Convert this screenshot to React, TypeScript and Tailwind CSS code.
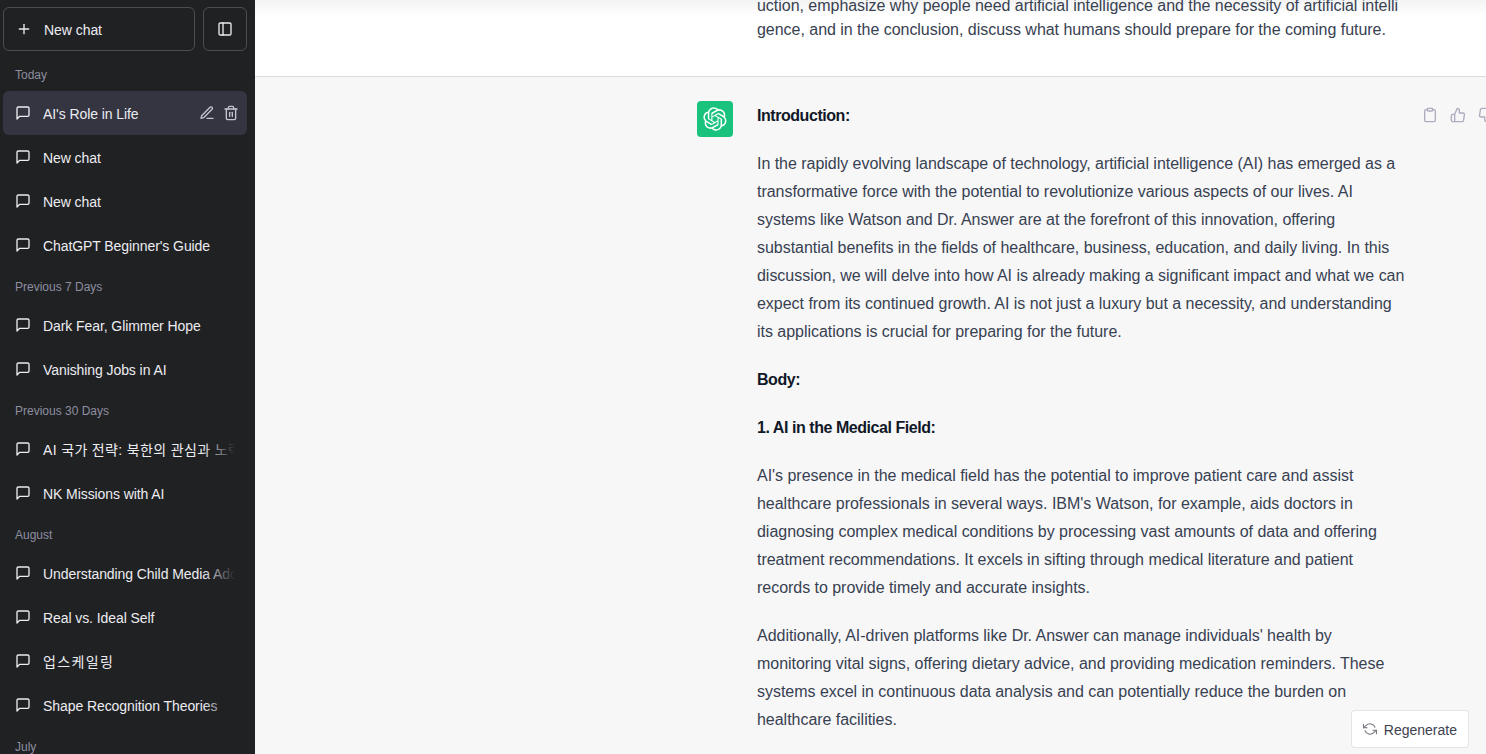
import React from "react";

const Ic = ({ className = "", children, w = 2 }: { className?: string; children: React.ReactNode; w?: number }) => (
  <svg viewBox="0 0 24 24" fill="none" stroke="currentColor" strokeWidth={w} strokeLinecap="round" strokeLinejoin="round" className={className}>
    {children}
  </svg>
);

const Chat = () => (
  <Ic className="h-4 w-4 shrink-0">
    <path d="M21 15a2 2 0 0 1-2 2H7l-4 4V5a2 2 0 0 1 2-2h14a2 2 0 0 1 2 2z" />
  </Ic>
);

const Row = ({ title, active, fade, spacing = "tracking-[-0.08px]" }: { title: string; active?: boolean; fade?: boolean; spacing?: string }) => (
  <div className={`relative flex h-11 items-center gap-3 rounded-md px-3 ${active ? "bg-[#343541]" : ""}`}>
    <Chat />
    <div className={`relative flex-1 overflow-hidden whitespace-nowrap pt-0.5 text-sm leading-5 ${spacing}`}>
      {title}
      {fade && <div className="absolute inset-y-0 right-0 w-8 bg-gradient-to-l from-[#202123] to-transparent" />}
    </div>
    {active && (
      <div className="absolute right-2 top-0 flex h-full items-center gap-2 text-[#c5c5d2]">
        <Ic className="h-4 w-4">
          <path d="M12 20h9" />
          <path d="M16.5 3.5a2.121 2.121 0 0 1 3 3L7 19l-4 1 1-4L16.5 3.5z" />
        </Ic>
        <Ic className="h-4 w-4">
          <polyline points="3 6 5 6 21 6" />
          <path d="M19 6v14a2 2 0 0 1-2 2H7a2 2 0 0 1-2-2V6m3 0V4a2 2 0 0 1 2-2h4a2 2 0 0 1 2 2v2" />
          <line x1="10" y1="11" x2="10" y2="17" />
          <line x1="14" y1="11" x2="14" y2="17" />
        </Ic>
      </div>
    )}
  </div>
);

const Label = ({ text }: { text: string }) => (
  <div className="h-9 px-3 pb-2 pt-3 text-xs font-medium leading-4 text-[#8e8ea0]">{text}</div>
);

const paragraphs: { bold?: boolean; lines: string[] }[] = [
  { bold: true, lines: ["Introduction:"] },
  {
    lines: [
      "In the rapidly evolving landscape of technology, artificial intelligence (AI) has emerged as a",
      "transformative force with the potential to revolutionize various aspects of our lives. AI",
      "systems like Watson and Dr. Answer are at the forefront of this innovation, offering",
      "substantial benefits in the fields of healthcare, business, education, and daily living. In this",
      "discussion, we will delve into how AI is already making a significant impact and what we can",
      "expect from its continued growth. AI is not just a luxury but a necessity, and understanding",
      "its applications is crucial for preparing for the future.",
    ],
  },
  { bold: true, lines: ["Body:"] },
  { bold: true, lines: ["1. AI in the Medical Field:"] },
  {
    lines: [
      "AI's presence in the medical field has the potential to improve patient care and assist",
      "healthcare professionals in several ways. IBM's Watson, for example, aids doctors in",
      "diagnosing complex medical conditions by processing vast amounts of data and offering",
      "treatment recommendations. It excels in sifting through medical literature and patient",
      "records to provide timely and accurate insights.",
    ],
  },
  {
    lines: [
      "Additionally, AI-driven platforms like Dr. Answer can manage individuals' health by",
      "monitoring vital signs, offering dietary advice, and providing medication reminders. These",
      "systems excel in continuous data analysis and can potentially reduce the burden on",
      "healthcare facilities.",
    ],
  },
];

export default function App() {
  return (
    <div className="flex h-[754px] w-[1486px] overflow-hidden bg-white font-['Liberation_Sans','Noto_Sans_CJK_KR',sans-serif] text-[#374151]">
      <aside className="flex w-[255px] shrink-0 flex-col overflow-hidden bg-[#202123] pl-[3px] pr-2 pt-[7px] text-[#ececf1]">
        <div className="flex gap-2">
          <div className="flex h-11 flex-1 items-center gap-3 rounded-md border border-white/20 px-3 text-sm">
            <Ic className="h-4 w-4">
              <line x1="12" y1="5" x2="12" y2="19" />
              <line x1="5" y1="12" x2="19" y2="12" />
            </Ic>
            <span className="pt-0.5 tracking-[-0.05px]">New chat</span>
          </div>
          <div className="flex h-11 w-11 items-center justify-center rounded-md border border-white/20">
            <Ic className="h-4 w-4">
              <rect x="3" y="3" width="18" height="18" rx="2" ry="2" />
              <line x1="9" y1="3" x2="9" y2="21" />
            </Ic>
          </div>
        </div>
        <div className="mt-1 shrink-0">
          <Label text="Today" />
          <Row title="AI's Role in Life" active />
          <Row title="New chat" />
          <Row title="New chat" />
          <Row title="ChatGPT Beginner's Guide" />
          <Label text="Previous 7 Days" />
          <Row title="Dark Fear, Glimmer Hope" />
          <Row title="Vanishing Jobs in AI" />
          <Label text="Previous 30 Days" />
          <Row title="AI 국가 전략: 북한의 관심과 노력에 대한 분석" fade spacing="tracking-[0.35px]" />
          <Row title="NK Missions with AI" />
          <Label text="August" />
          <Row title="Understanding Child Media Addiction" fade />
          <Row title="Real vs. Ideal Self" />
          <Row title="업스케일링" spacing="tracking-[1.4px]" />
          <Row title="Shape Recognition Theories" fade />
          <Label text="July" />
        </div>
      </aside>

      <main className="relative flex min-w-0 flex-1 flex-col overflow-hidden">
        <div className="relative flex h-[77px] shrink-0 flex-col justify-end overflow-hidden border-b border-black/10 bg-gradient-to-b from-[#f3f3f3] via-white via-20% to-white pb-[34px] pl-[502px] leading-6 tracking-[-0.03px]">
          <div className="whitespace-nowrap">uction, emphasize why people need artificial intelligence and the necessity of artificial intelli</div>
          <div className="whitespace-nowrap">gence, and in the conclusion, discuss what humans should prepare for the coming future.</div>
        </div>
        <div className="flex flex-1 bg-[#f7f7f8] pl-[442px] pt-6">
          <div className="mr-6 flex h-9 w-9 shrink-0 items-center justify-center rounded-sm bg-[#19c37d] text-white">
            <svg viewBox="0 0 41 41" fill="currentColor" className="h-6 w-6">
              <path d="M37.5324 16.8707C37.9808 15.5241 38.1363 14.0974 37.9886 12.6859C37.8409 11.2744 37.3934 9.91076 36.676 8.68622C35.6126 6.83404 33.9882 5.3676 32.0373 4.4985C30.0864 3.62941 27.9098 3.40259 25.8215 3.85078C24.8796 2.7893 23.7219 1.94125 22.4257 1.36341C21.1295 0.785575 19.7249 0.491269 18.3058 0.500197C16.1708 0.495044 14.0893 1.16803 12.3614 2.42214C10.6335 3.67624 9.34853 5.44666 8.6917 7.47815C7.30085 7.76286 5.98686 8.3414 4.8377 9.17505C3.68854 10.0087 2.73073 11.0782 2.02839 12.312C0.956464 14.1591 0.498905 16.2988 0.721698 18.4228C0.944492 20.5467 1.83612 22.5449 3.268 24.1293C2.81966 25.4759 2.66413 26.9026 2.81182 28.3141C2.95951 29.7256 3.40701 31.0892 4.12437 32.3138C5.18791 34.1659 6.8123 35.6322 8.76321 36.5013C10.7141 37.3704 12.8907 37.5973 14.9789 37.1492C15.9208 38.2107 17.0786 39.0587 18.3747 39.6366C19.6709 40.2144 21.0755 40.5087 22.4946 40.4998C24.6307 40.5054 26.7133 39.8321 28.4418 38.5772C30.1704 37.3223 31.4556 35.5506 32.1119 33.5179C33.5027 33.2332 34.8167 32.6547 35.9659 31.821C37.115 30.9874 38.0728 29.9178 38.7752 28.684C39.8458 26.8371 40.3023 24.6979 40.0789 22.5748C39.8556 20.4517 38.9639 18.4544 37.5324 16.8707ZM22.4978 37.8849C20.7443 37.8874 19.0459 37.2733 17.6994 36.1501C17.7601 36.117 17.8666 36.0586 17.936 36.0161L25.9004 31.4156C26.1003 31.3019 26.2663 31.137 26.3813 30.9378C26.4964 30.7386 26.5563 30.5124 26.5549 30.2825V19.0542L29.9213 20.998C29.9389 21.0068 29.9541 21.0198 29.9656 21.0359C29.977 21.052 29.9842 21.0707 29.9867 21.0902V30.3889C29.9842 32.375 29.1946 34.2791 27.7909 35.6841C26.3872 37.0892 24.4838 37.8806 22.4978 37.8849ZM6.39227 31.0064C5.51397 29.4888 5.19742 27.7107 5.49804 25.9832C5.55718 26.0187 5.66048 26.0818 5.73461 26.1244L13.699 30.7248C13.8975 30.8408 14.1233 30.902 14.3532 30.902C14.583 30.902 14.8088 30.8408 15.0073 30.7248L24.731 25.1103V28.9979C24.7321 29.0177 24.7283 29.0376 24.7199 29.0556C24.7115 29.0736 24.6988 29.0893 24.6829 29.1012L16.6317 33.7497C14.9096 34.7416 12.8643 35.0097 10.9447 34.4954C9.02506 33.9811 7.38785 32.7263 6.39227 31.0064ZM4.29707 13.6194C5.17156 12.0998 6.55279 10.9364 8.19885 10.3327C8.19885 10.4013 8.19491 10.5228 8.19491 10.6071V19.808C8.19351 20.0378 8.25334 20.2638 8.36823 20.4629C8.48312 20.6619 8.64893 20.8267 8.84863 20.9404L18.5723 26.5542L15.206 28.4979C15.1894 28.5089 15.1703 28.5155 15.1505 28.5173C15.1307 28.5191 15.1107 28.516 15.0924 28.5082L7.04046 23.8557C5.32135 22.8601 4.06716 21.2235 3.55289 19.3046C3.03862 17.3858 3.30624 15.3413 4.29707 13.6194ZM31.955 20.0556L22.2312 14.4411L25.5976 12.4981C25.6142 12.4872 25.6333 12.4805 25.6531 12.4787C25.6729 12.4769 25.6928 12.4801 25.7111 12.4879L33.7631 17.1364C34.9967 17.849 36.0017 18.8982 36.6606 20.1613C37.3194 21.4244 37.6047 22.849 37.4832 24.2684C37.3617 25.6878 36.8382 27.0432 35.9743 28.1759C35.1103 29.3086 33.9415 30.1717 32.6047 30.6641C32.6047 30.5947 32.6047 30.4733 32.6047 30.3889V21.188C32.6066 20.9586 32.5474 20.7328 32.4332 20.5338C32.319 20.3348 32.154 20.1698 31.955 20.0556ZM35.3055 15.0128C35.2464 14.9765 35.1431 14.9142 35.069 14.8717L27.1045 10.2712C26.906 10.1554 26.6803 10.0943 26.4504 10.0943C26.2206 10.0943 25.9948 10.1554 25.7963 10.2712L16.0726 15.8858V11.9982C16.0715 11.9783 16.0753 11.9585 16.0837 11.9405C16.0921 11.9225 16.1048 11.9068 16.1207 11.8949L24.1719 7.25025C25.4053 6.53903 26.8158 6.19376 28.2383 6.25482C29.6608 6.31589 31.0364 6.78077 32.2044 7.59508C33.3723 8.40939 34.2842 9.53945 34.8334 10.8531C35.3826 12.1667 35.5464 13.6095 35.3055 15.0128ZM14.2424 21.9419L10.8752 19.9981C10.8576 19.9893 10.8423 19.9763 10.8309 19.9602C10.8195 19.9441 10.8122 19.9254 10.8098 19.9058V10.6071C10.8107 9.18295 11.2173 7.78848 11.9819 6.58696C12.7466 5.38544 13.8377 4.42659 15.1275 3.82264C16.4173 3.21869 17.8524 2.99464 19.2649 3.1767C20.6775 3.35876 22.0089 3.93941 23.1034 4.85067C23.0427 4.88379 22.937 4.94215 22.8668 4.98473L14.9024 9.58517C14.7025 9.69878 14.5366 9.86356 14.4215 10.0626C14.3065 10.2616 14.2466 10.4877 14.2479 10.7175L14.2424 21.9419ZM16.071 17.9991L20.4018 15.4978L24.7325 17.9975V22.9985L20.4018 25.4983L16.071 22.9985V17.9991Z" />
            </svg>
          </div>
          <div className="flex w-[648px] shrink-0 flex-col gap-5 pt-px leading-7 tracking-[-0.03px]">
            {paragraphs.map((p, i) => (
              <div key={i} className={p.bold ? "font-semibold tracking-[-0.45px] text-[#111827]" : ""}>
                {p.lines.map((l, j) => (
                  <div key={j} className="whitespace-nowrap">{l}</div>
                ))}
              </div>
            ))}
          </div>
          <div className="ml-[17px] flex h-7 shrink-0 items-center gap-3 text-[#acacbe]">
            <Ic className="h-4 w-4 shrink-0">
              <path d="M16 4h2a2 2 0 0 1 2 2v14a2 2 0 0 1-2 2H6a2 2 0 0 1-2-2V6a2 2 0 0 1 2-2h2" />
              <rect x="8" y="2" width="8" height="4" rx="1" ry="1" />
            </Ic>
            <Ic className="h-4 w-4 shrink-0">
              <path d="M14 9V5a3 3 0 0 0-3-3l-4 9v11h11.28a2 2 0 0 0 2-1.7l1.38-9a2 2 0 0 0-2-2.3zM7 22H4a2 2 0 0 1-2-2v-7a2 2 0 0 1 2-2h3" />
            </Ic>
            <Ic className="h-4 w-4 shrink-0">
              <path d="M10 15v4a3 3 0 0 0 3 3l4-9V2H5.72a2 2 0 0 0-2 1.7l-1.38 9a2 2 0 0 0 2 2.3zm7-13h2.67A2.31 2.31 0 0 1 22 4v7a2.31 2.31 0 0 1-2.33 2H17" />
            </Ic>
          </div>
        </div>
        <div className="absolute bottom-[6px] right-[17px] flex h-[38px] items-center gap-[7px] rounded border border-black/10 bg-white px-[11px] text-sm text-[#40414f]">
          <Ic className="h-3.5 w-3.5 text-[#71717a]" w={1.75}>
            <polyline points="1 4 1 10 7 10" />
            <polyline points="23 20 23 14 17 14" />
            <path d="M20.49 9A9 9 0 0 0 5.64 5.64L1 10m22 4l-4.64 4.36A9 9 0 0 1 3.51 15" />
          </Ic>
          <span className="pt-0.5">Regenerate</span>
        </div>
      </main>
    </div>
  );
}
